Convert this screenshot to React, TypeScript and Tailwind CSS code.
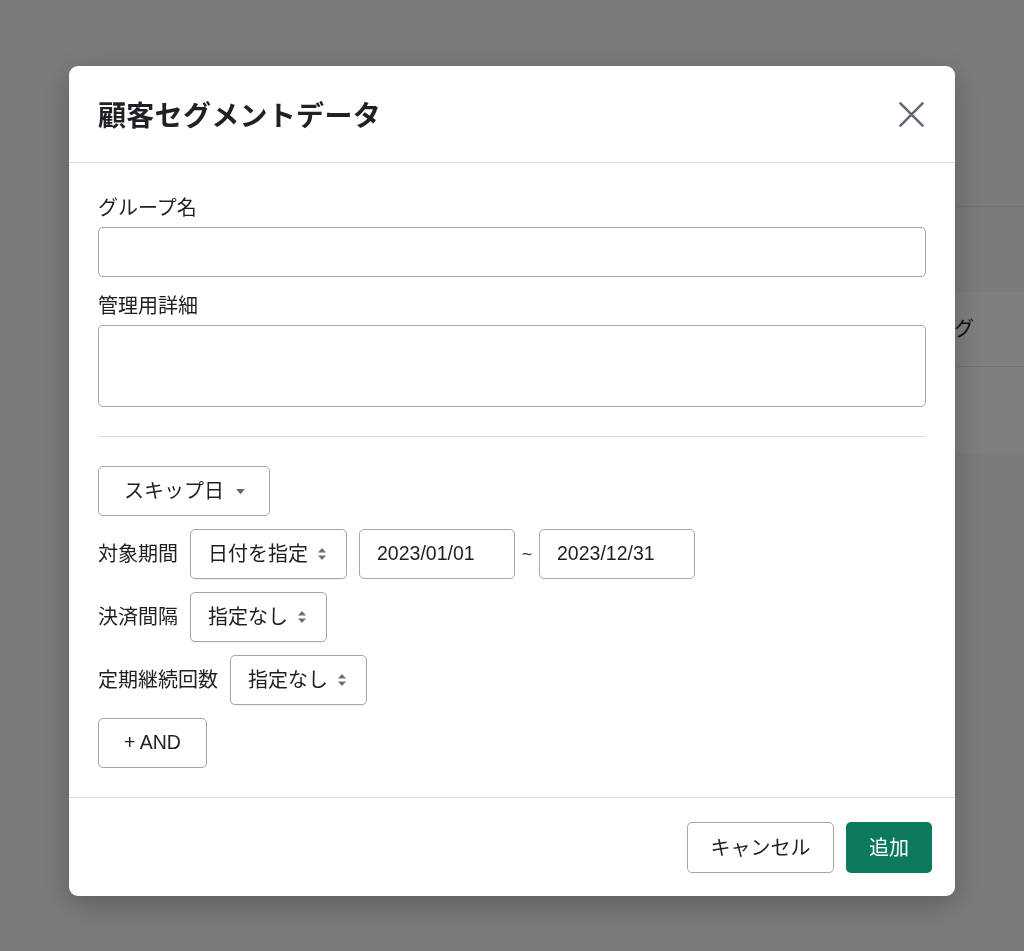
const FONT = { fontFamily: '"Liberation Sans", "Noto Sans CJK JP", sans-serif' };

function UpDown() {
  return (
    <svg width="10" height="14" viewBox="0 0 10 14" className="ml-[9px] shrink-0">
      <path d="M5 1 L9 5.5 H1 Z" fill="#6b7079" />
      <path d="M5 13 L9 8.5 H1 Z" fill="#6b7079" />
    </svg>
  );
}

function Select({ label, width }: { label: string; width: string }) {
  return (
    <div className={`flex items-center h-[50px] ${width} pl-[17px] border border-[#a4a6ad] rounded-[5px] bg-white text-[20px] text-[#1d1f23] shadow-[0_1px_0_rgba(0,0,0,0.05)]`}>
      <span>{label}</span>
      <UpDown />
    </div>
  );
}

function DateBox({ value }: { value: string }) {
  return (
    <div className="flex items-center h-[50px] w-[156px] pl-[17px] border border-[#a4a6ad] rounded-[5px] bg-white text-[19.5px] text-[#1d1f23]">
      {value}
    </div>
  );
}

export default function App() {
  return (
    <div className="relative min-h-screen bg-[#f5f6fa]" style={FONT}>
      {/* page behind the dialog */}
      <div className="ml-[220px]">
        <div className="h-[207px] border-b border-[#e4e5ea]" />
        <div className="h-[85px]" />
        <div className="h-[75px] bg-white border-b border-[#e4e5ea] flex items-center justify-end pr-[50px] text-[20px] text-[#1d1f23]">
          タグ
        </div>
        <div className="h-[86px] bg-white" />
      </div>

      {/* overlay */}
      <div className="fixed inset-0 bg-black/50 flex justify-center items-start pt-[66px]">
        <div className="w-[886px] bg-white rounded-[9px] shadow-[0_8px_30px_rgba(0,0,0,0.25)]">
          <div className="h-[97px] px-[29px] flex items-center justify-between border-b border-[#dcdde3]">
            <h1 className="pt-[5px] text-[28px] font-bold text-[#1f2126] tracking-[0.3px]">顧客セグメントデータ</h1>
            <svg width="25" height="25" viewBox="0 0 26 26" className="mr-[2px]">
              <path d="M1.5 1.5 L24.5 24.5 M24.5 1.5 L1.5 24.5" stroke="#5f6871" strokeWidth="2.6" strokeLinecap="round" />
            </svg>
          </div>

          <div className="px-[29px] pt-[28px] pb-[29px] text-[#1d1f23]">
            <label className="block text-[20px] leading-[34px] mb-[2px]">グループ名</label>
            <div className="h-[50px] border border-[#a4a6ad] rounded-[5px]" />
            <label className="block text-[20px] leading-[34px] mt-[12px] mb-[2px]">管理用詳細</label>
            <div className="h-[82px] border border-[#a4a6ad] rounded-[5px]" />

            <div className="my-[29px] border-t border-[#dcdde0]" />

            <div className="flex flex-col gap-[13px] items-start">
              <div className="flex items-center h-[50px] w-[172px] pl-[25px] border border-[#a4a6ad] rounded-[5px] text-[20px]">
                <span>スキップ日</span>
                <svg width="11" height="7" viewBox="0 0 12 8" className="ml-[11px]">
                  <path d="M1 1 H11 L6 7 Z" fill="#5f6871" />
                </svg>
              </div>

              <div className="flex items-center">
                <span className="text-[20px] mr-[12px]">対象期間</span>
                <Select label="日付を指定" width="w-[157px]" />
                <div className="ml-[12px]">
                  <DateBox value="2023/01/01" />
                </div>
                <span className="w-[24px] text-center text-[18px] text-[#3a3d42]">~</span>
                <DateBox value="2023/12/31" />
              </div>

              <div className="flex items-center">
                <span className="text-[20px] mr-[12px]">決済間隔</span>
                <Select label="指定なし" width="w-[137px]" />
              </div>

              <div className="flex items-center">
                <span className="text-[20px] mr-[12px]">定期継続回数</span>
                <Select label="指定なし" width="w-[137px]" />
              </div>

              <button className="h-[50px] w-[109px] border border-[#a4a6ad] rounded-[5px] text-[19.5px] text-[#1d1f23]">
                + AND
              </button>
            </div>
          </div>

          <div className="border-t border-[#dcdde3] flex justify-end gap-[12px] pt-[24px] pb-[23px] pr-[23px]">
            <button className="h-[51px] w-[147px] border border-[#a4a6ad] rounded-[5px] text-[20px] text-[#1d1f23]">
              キャンセル
            </button>
            <button className="h-[51px] w-[86px] bg-[#0b7a5c] rounded-[5px] text-[20px] text-white">
              追加
            </button>
          </div>
        </div>
      </div>
    </div>
  );
}
